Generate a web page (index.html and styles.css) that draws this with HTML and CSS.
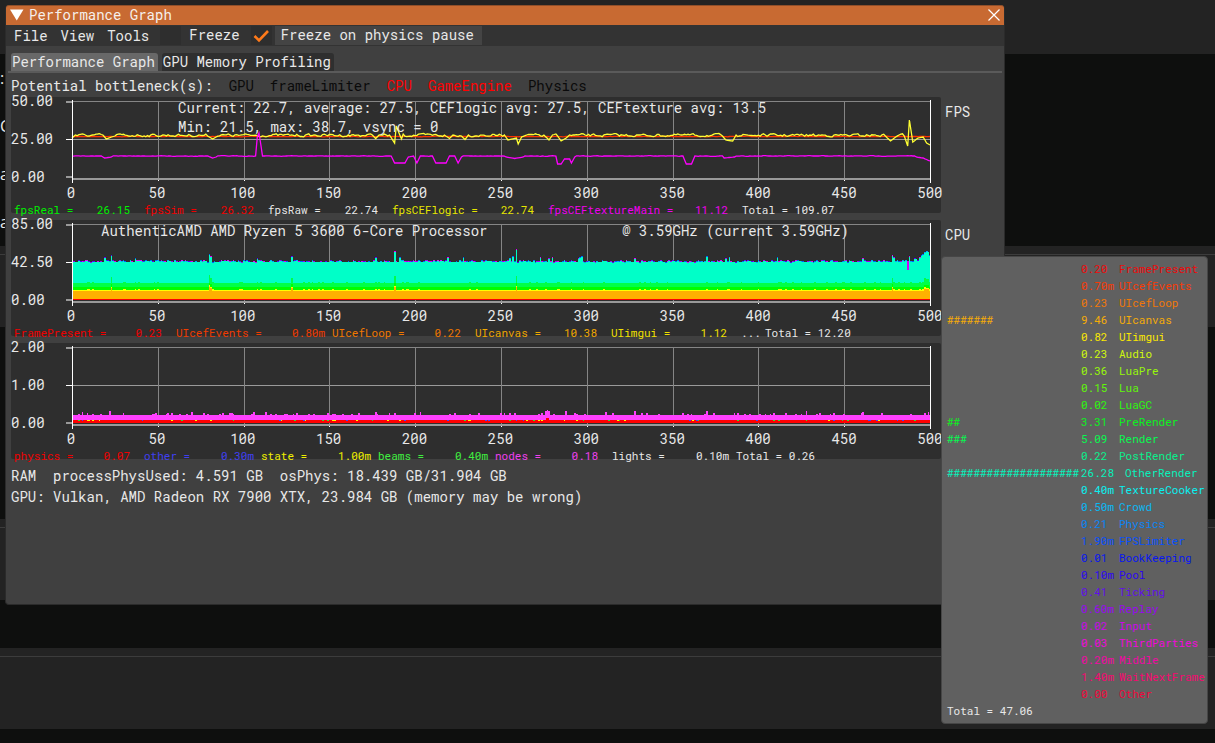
FILE: index.html
```
<!DOCTYPE html>
<html lang="en">
<head>
  <title>Performance Graph</title>
  <meta charset="UTF-8">
  <meta name="viewport" content="width=device-width, initial-scale=1.0">
  <link rel="stylesheet" href="styles.css">
</head>
<body>
<div class="backdrop">
  <div class="band band-top"></div>
  <div class="gap gap-list">
    <span>:</span>
    <span>C</span>
    <span>a</span>
    <span>a(</span>
  </div>
  <div class="band"></div>
  <div class="gap gap-tall"></div>
  <div class="band"></div>
  <div class="gap gap-short"></div>
  <div class="band"></div>
</div>

<main class="window">
  <header class="titlebar">
    <button class="icon-btn" aria-label="Collapse">
      <svg width="14" height="12" viewBox="0 0 14 12"><path d="M0 0.500H13.500L6.750 11.500Z" fill="#fff"/></svg>
    </button>
    <h1>Performance Graph</h1>
    <button class="icon-btn close" aria-label="Close">
      <svg width="12" height="12" viewBox="0 0 12 12"><path d="M0.500 0.500L11.500 11.500M11.500 0.500L0.500 11.500" stroke="#fff" stroke-width="1.200"/></svg>
    </button>
  </header>
  <nav class="menubar">
    <button>File</button>
    <button>View</button>
    <button>Tools</button>
    <label class="check"><input type="checkbox"><span>Freeze</span></label>
    <label class="check check-hover"><input type="checkbox" checked><span>Freeze on physics pause</span></label>
  </nav>
  <div class="tabs">
    <button class="active">Performance Graph</button>
    <button>GPU Memory Profiling</button>
  </div>
  <section class="content">
    <p class="bottleneck">
      <span>Potential bottleneck(s):</span>
      <span class="off">GPU</span>
      <span class="off">frameLimiter</span>
      <span class="hot">CPU</span>
      <span class="hot">GameEngine</span>
      <span class="off">Physics</span>
    </p>

    <div class="graph-row">
      <div class="graph">
        <div class="plot-row">
          <div class="y-axis"><span>50.00</span><span>25.00</span><span>0.00</span></div>
          <svg class="plot" id="plot-fps" viewBox="0 0 865 84" preserveAspectRatio="none"></svg>
        </div>
        <div class="x-axis"></div>
        <div class="legend" id="legend-fps"></div>
        <div class="overlay overlay-fps">Current: 22.7, average: 27.5, CEFlogic avg: 27.5, CEFtexture avg: 13.5<br>Min: 21.5, max: 38.7, vsync = 0</div>
      </div>
      <h2>FPS</h2>
    </div>

    <div class="graph-row">
      <div class="graph">
        <div class="plot-row">
          <div class="y-axis"><span>85.00</span><span>42.50</span><span>0.00</span></div>
          <svg class="plot" id="plot-cpu" viewBox="0 0 865 84" preserveAspectRatio="none"></svg>
        </div>
        <div class="x-axis"></div>
        <div class="legend" id="legend-cpu"></div>
        <div class="overlay overlay-cpu"><span>AuthenticAMD AMD Ryzen 5 3600 6-Core Processor</span><span>@ 3.59GHz (current 3.59GHz)</span></div>
      </div>
      <h2>CPU</h2>
    </div>

    <div class="graph-row">
      <div class="graph">
        <div class="plot-row">
          <div class="y-axis"><span>2.00</span><span>1.00</span><span>0.00</span></div>
          <svg class="plot" id="plot-physics" viewBox="0 0 865 84" preserveAspectRatio="none"></svg>
        </div>
        <div class="x-axis"></div>
        <div class="legend" id="legend-physics"></div>
      </div>
      <h2></h2>
    </div>

    <p class="info">RAM&nbsp; processPhysUsed: 4.591 GB&nbsp; osPhys: 18.439 GB/31.904 GB</p>
    <p class="info">GPU: Vulkan, AMD Radeon RX 7900 XTX, 23.984 GB (memory may be wrong)</p>
  </section>
</main>

<aside class="tooltip">
  <table>
    <tbody id="timings"></tbody>
    <tfoot><tr><td colspan="3">Total = 47.06</td></tr></tfoot>
  </table>
</aside>
<script src="graphs.js"></script>
</body>
</html>
```
FILE: styles.css
```
* {
  box-sizing: border-box;
}
body {
  margin: 0;
  min-height: 100vh;
  background: #0e0f0e;
  color: #e8e8e8;
  font-family: 'Roboto Mono', 'DejaVu Sans Mono', monospace;
  font-size: 14px;
  line-height: 16px;
  overflow: hidden;
}
button {
  font: inherit;
  color: inherit;
  background: none;
  border: none;
  padding: 0;
  cursor: pointer;
}
h1, h2, p {
  margin: 0;
  font-size: 14px;
  font-weight: normal;
}

/* panels behind the window */
.backdrop {
  height: 100vh;
  overflow: hidden;
}
.band {
  height: 81px;
  padding-top: 8px;
  background: #232323;
}
.band::before {
  content: '';
  display: block;
  border-top: 1px solid #3c3c3c;
}
.band-top {
  height: 54px;
}
.band-top::before {
  display: none;
}
.gap-list {
  display: flex;
  flex-direction: column;
  height: 192px;
  font: 16px/48px 'Open Sans', sans-serif;
}
.gap-list span {
  width: 6px;
  overflow: hidden;
}
.gap-tall {
  height: 192px;
}
.gap-short {
  height: 48px;
}

/* main window */
.window {
  position: absolute;
  top: 5px;
  right: 210px;
  bottom: 138px;
  left: 5px;
  background: #404040;
  border: 1px solid #2b2b2b;
  border-top: none;
  border-radius: 4px;
}
.titlebar {
  display: flex;
  align-items: center;
  gap: 5px;
  height: 20px;
  padding: 0 4px 1px;
  background: #c86a32;
  border-top: 1px solid #8f4f2a;
  border-radius: 3px 3px 0 0;
  color: #f6f0ec;
}
.icon-btn {
  display: flex;
}
.close {
  margin-left: auto;
}
.menubar {
  display: flex;
  align-items: center;
  height: 21px;
  padding-left: 8px;
  background: #333;
}
.menubar button {
  margin-right: 13px;
}
.check {
  display: flex;
  align-items: center;
  margin-left: -2px;
}
.check input {
  appearance: none;
  width: 21px;
  height: 19px;
  margin: 0;
  background: #2e2e2e;
}
.check input:checked {
  background: #2e2e2e url("data:image/svg+xml,%3Csvg xmlns='http://www.w3.org/2000/svg' viewBox='0 0 21 19'%3E%3Cpath d='M3.500 10L8 14.500L17 5' fill='none' stroke='%23ff7a1a' stroke-width='2.600'/%3E%3C/svg%3E") center no-repeat;
}
.check span {
  padding: 1px 8px 2px;
}
.check-hover {
  margin-left: 3px;
}
.check-hover span {
  margin-left: 3px;
  padding: 1px 8px 2px 6px;
  background: #444;
}
.tabs {
  display: flex;
  gap: 4px;
  margin: 7px 2px 0;
  padding-left: 3px;
  border-bottom: 2px solid #5a5a5a;
}
.tabs button {
  height: 18px;
  padding: 0 3px 0 1px;
  background: #2f2f2f;
  border-radius: 3px 3px 0 0;
}
.tabs .active {
  background: #686868;
}
.content {
  padding-left: 5px;
}
.bottleneck {
  display: flex;
  gap: 16px;
  padding: 5px 0 3px;
}
.off {
  color: #0a0a0a;
}
.hot {
  color: #f00;
}

/* graphs */
.graph-row {
  display: flex;
  margin-bottom: 7px;
}
.graph-row h2 {
  width: 63px;
  padding: 7px 0 0 4px;
}
.graph {
  position: relative;
  flex: 1;
  min-width: 0;
  padding-top: 3px;
  background: #2e2e2e;
  border-radius: 2px;
}
.plot-row {
  display: flex;
  height: 84px;
  padding-right: 10px;
}
.y-axis {
  display: flex;
  flex-direction: column;
  justify-content: space-between;
  flex: none;
  width: 55px;
  height: 90px;
  margin-top: -6px;
  line-height: 14px;
}
.plot {
  flex: 1;
  min-width: 0;
  height: 84px;
}
.x-axis {
  display: flex;
  justify-content: space-between;
  height: 16px;
  margin: 0 11px 0 60px;
  padding-top: 1px;
}
.x-axis span {
  display: flex;
  justify-content: center;
  width: 0;
}
.legend {
  display: flex;
  margin: 3px 0 -4px;
  padding-left: 3px;
  font-size: 11px;
  line-height: 13px;
  padding-bottom: 1px;
  white-space: nowrap;
}
.legend-item {
  display: flex;
  justify-content: space-between;
  flex: none;
}
.legend-value {
  padding-right: 14px;
}
.legend-value.milli {
  padding-right: 7px;
}
.more {
  width: 24px;
}
.overlay {
  position: absolute;
  top: 1px;
  line-height: 19px;
  white-space: nowrap;
}
.overlay-fps {
  left: 167px;
}
.overlay-cpu {
  display: flex;
  justify-content: space-between;
  left: 90px;
  right: 92px;
}
.info {
  margin-bottom: 5px;
}
.graph-row + .info {
  margin-top: 9px;
}

/* timings tooltip */
.tooltip {
  position: absolute;
  top: 256px;
  right: 7px;
  width: 267px;
  padding: 3px 0 4px 5px;
  background: #606060;
  border: 1px solid #464646;
  border-radius: 4px;
  font-size: 11px;
}
.tooltip table {
  width: 100%;
  border-collapse: collapse;
  table-layout: fixed;
}
.tooltip td {
  height: 17px;
  padding: 0;
  white-space: nowrap;
}
.tooltip .bar {
  width: 134px;
}
.tooltip .time {
  width: 38px;
}
.tooltip .wide {
  padding-left: 6px;
}
```
FILE: graphs.js
```
const COLUMNS = 500;
const STEP = 858 / COLUMNS;

let seed = 7;
function rand() {
  seed = (seed * 16807) % 2147483647;
  return seed / 2147483647;
}

function rect(x, y, w, h, fill) {
  return `<rect x="${x}" y="${y}" width="${w}" height="${h}" fill="${fill}"/>`;
}

function line(points, color) {
  const d = points.map(p => p[0].toFixed(1) + ',' + p[1].toFixed(1)).join(' ');
  return `<polyline points="${d}" fill="none" stroke="${color}" stroke-width="1.3"/>`;
}

function drawGrid() {
  let out = rect(6, 1, 859, 1, '#858585') + rect(6, 39, 859, 1, '#9a9a9a');
  for (let i = 1; i < 10; i++) {
    const x = Math.round(6 + i * 85.8);
    out += rect(x, 1, 1, 78, '#858585') + rect(x, 78, 1, 3, '#fff');
  }
  return out;
}

function drawAxes() {
  return rect(6, 78, 859, 2, '#999')
    + rect(0, 1, 6, 2, '#999') + rect(0, 39, 6, 1, '#fff') + rect(0, 76, 6, 2, '#999')
    + rect(6, 0, 1, 83, '#fff') + rect(864, 0, 1, 83, '#fff');
}

// keys are [column, y] pairs, linearly interpolated over the base line
function series(base, noise, keys) {
  const points = [];
  let drift = 0;
  for (let i = 0; i <= COLUMNS; i++) {
    drift = drift * 0.45 + (rand() - 0.5) * noise;
    let y = base + drift;
    for (let k = 0; k < keys.length - 1; k++) {
      const a = keys[k], b = keys[k + 1];
      if (a[1] !== null && b[1] !== null && i >= a[0] && i <= b[0]) {
        y = a[1] + (b[1] - a[1]) * (i - a[0]) / (b[0] - a[0]);
      }
    }
    points.push([6 + i * STEP, y]);
  }
  return points;
}

function drawFps() {
  const red = series(36.5, 0.4, []);
  const yellow = series(35.3, 2.4, [
    [0, 38], [2, 35], [2, null],
    [18, 35], [20, 39], [23, 37], [25, 36], [25, null],
    [79, 36], [82, 39], [84, 37], [84, null],
    [175, 35], [177, 38.5], [179, 35], [179, null],
    [185, 35], [188, 43], [189, 26], [191, 35], [192, 39], [193, 34], [193, null],
    [217, 35], [220, 38.5], [222, 35], [222, null],
    [227, 36], [229, 39.5], [231, 35], [231, null],
    [252, 35], [254, 40], [259, 38], [260, 44], [262, 37], [265, 35], [265, null],
    [275, 35], [278, 40], [280, 35], [280, null],
    [283, 36], [285, 41], [288, 38], [290, 35], [290, null],
    [379, 36], [381, 40], [385, 41], [387, 35], [387, null],
    [474, 36], [477, 41], [480, 37], [480, null],
    [485, 36], [487, 46], [488, 20], [490, 42], [493, 38], [496, 37], [498, 43], [500, 45]
  ]);
  const magenta = series(56, 0.5, [
    [17, 56], [19, 58], [23, 57], [23, null],
    [79, 56], [82, 58], [84, 57], [84, null],
    [107, 56], [108, 37], [109, 33], [111, 56], [111, null],
    [186, 56], [188, 63], [194, 63], [196, 57], [199, 56], [201, 63], [203, 56], [203, null],
    [210, 56], [212, 63], [218, 63], [220, 56], [223, 56], [225, 63], [227, 57], [227, null],
    [253, 57], [258, 58.5], [263, 57], [263, null],
    [282, 56], [283, 64], [285, 64], [287, 59], [290, 59], [291, 63], [293, 57], [293, null],
    [356, 56], [358, 64], [361, 64], [363, 56], [363, null],
    [380, 58], [386, 57], [386, null],
    [492, 57], [496, 58], [500, 61]
  ]);
  return drawGrid() + line(red, '#f30') + line(yellow, '#ff3') + line(magenta, '#f0f') + drawAxes();
}

function drawCpu() {
  const spikes = {
    18: 3, 22: 6, 36: 2, 79: 7, 80: 5, 107: 3, 127: 5, 176: 4, 187: 10, 190: 4, 218: 3,
    227: 4, 254: 3, 256: 4, 258: 11, 272: 3, 277: 3, 279: 4, 294: 3, 295: 4, 296: 4,
    327: 3, 369: 4, 380: 3, 382: 4, 410: 3, 460: 3, 477: 5, 478: 4, 487: 5, 490: 3,
    491: 3, 493: 4, 494: 6, 495: 6, 496: 8, 497: 10, 498: 10, 499: 6
  };
  const tips = ['#00a0ff', '#5a00ff', '#0060ff', '#a000ff', '#e000ff'];
  let out = drawGrid();
  let prev = 7;
  for (let i = 0; i < COLUMNS; i++) {
    const x = Math.round(7 + i * STEP);
    const w = Math.round(7 + (i + 1) * STEP) - x;
    const spike = spikes[i] || 0;
    const top = 39 - spike - (rand() > 0.7 ? 1 : 0) + (rand() > 0.93 ? 1 : 0);
    const lift = spike > 4 && i < 487 ? Math.min(7, spike) : spike > 7 ? 4 : 0;
    const small = rand() > 0.85 ? 1 : 0;
    const orange = 67 - Math.round(lift / 2);
    out += rect(x, top, w, 77 - top, '#00ffc8');
    out += rect(x, 60 - lift - small, w, 17 + lift + small, '#00ff48');
    out += rect(x, 64 - Math.round(lift / 2), w, 10, '#0f0');
    out += rect(x, orange - small, w, 1 + small, '#ff0');
    out += rect(x, orange + 1, w, 75 - orange, '#ffb000');
    if (top !== prev || rand() > 0.5) {
      out += rect(x, top - 1, w, 1, tips[Math.floor(rand() * tips.length)]);
    }
    prev = top;
  }
  out += rect(841, 38, 2, 9, '#d000ff');
  out += rect(7, 76, 857, 1, '#f00');
  return out + drawAxes();
}

function drawPhysics() {
  const peaks = {
    5: 3, 21: 4, 29: 2, 69: 3, 105: 3, 112: 3, 130: 2, 176: 3, 187: 2, 202: 3,
    249: 2, 254: 2, 275: 4, 276: 5, 277: 4, 287: 4, 310: 3, 327: 4, 369: 4, 427: 4, 460: 3, 498: 3
  };
  const specks = ['#ff0', '#ff0', '#4040ff', '#30e030'];
  let out = drawGrid();
  for (let i = 0; i < COLUMNS; i++) {
    const x = Math.round(7 + i * STEP);
    const w = Math.round(7 + (i + 1) * STEP) - x;
    const top = 69 - (peaks[i] || (rand() > 0.86 ? 1 + Math.round(rand()) : 0));
    out += rect(x, top, w, 77 - top, '#ff40ff');
    out += rect(x, 74, w, 3, '#f00');
    if (rand() > 0.86) {
      out += rect(x, 74, w, 1, specks[Math.floor(rand() * specks.length)]);
    }
  }
  out += rect(480, 72, 3, 3, '#f00');
  return out + drawAxes();
}

function fillLegend(id, items, total, more) {
  let html = '';
  items.forEach(([name, value, color]) => {
    const width = Math.round((name.length + 13.3) * 6.4);
    const milli = value.endsWith('m') ? ' milli' : '';
    html += `<span class="legend-item" style="width:${width}px;color:${color}">`
      + `<span>${name} =</span><span class="legend-value${milli}">${value}</span></span>`;
  });
  if (more) html += '<span class="more">...</span>';
  document.getElementById(id).innerHTML = html + `<span>Total = ${total}</span>`;
}

document.getElementById('plot-fps').innerHTML = drawFps();
document.getElementById('plot-cpu').innerHTML = drawCpu();
document.getElementById('plot-physics').innerHTML = drawPhysics();

document.querySelectorAll('.x-axis').forEach(axis => {
  for (let v = 0; v <= 500; v += 50) {
    axis.innerHTML += `<span>${v}</span>`;
  }
});

fillLegend('legend-fps', [
  ['fpsReal', '26.15', '#00f000'],
  ['fpsSim', '26.32', '#f00000'],
  ['fpsRaw', '22.74', '#e8e8e8'],
  ['fpsCEFlogic', '22.74', '#e6e600'],
  ['fpsCEFtextureMain', '11.12', '#f000f0']
], '109.07');
fillLegend('legend-cpu', [
  ['FramePresent', '0.23', '#f00000'],
  ['UIcefEvents', '0.80m', '#f03c00'],
  ['UIcefLoop', '0.22', '#f07800'],
  ['UIcanvas', '10.38', '#f0a800'],
  ['UIimgui', '1.12', '#f0e000']
], '12.20', true);
fillLegend('legend-physics', [
  ['physics', '0.07', '#f00000'],
  ['other', '0.30m', '#4040f0'],
  ['state', '1.00m', '#f0f000'],
  ['beams', '0.40m', '#40f040'],
  ['nodes', '0.18', '#f040f0'],
  ['lights', '0.10m', '#e8e8e8']
], '0.26');

const timings = [
  ['FramePresent', '0.20', '#ee0a0a'],
  ['UIcefEvents', '0.70m', '#f53c08'],
  ['UIcefLoop', '0.23', '#f07808'],
  ['UIcanvas', '9.46', '#f5ac08', 7],
  ['UIimgui', '0.82', '#fbe800'],
  ['Audio', '0.23', '#d0f80c'],
  ['LuaPre', '0.36', '#98f808'],
  ['Lua', '0.15', '#60f808'],
  ['LuaGC', '0.02', '#2cf80c'],
  ['PreRender', '3.31', '#0cf020', 2],
  ['Render', '5.09', '#08f850', 3],
  ['PostRender', '0.22', '#08f08c'],
  ['OtherRender', '26.28', '#08f0bc', 20],
  ['TextureCooker', '0.40m', '#08f0f0'],
  ['Crowd', '0.50m', '#08b8f5'],
  ['Physics', '0.21', '#0884f5'],
  ['FPSLimiter', '1.90m', '#0850fa'],
  ['BookKeeping', '0.01', '#0818f0'],
  ['Pool', '0.10m', '#2c08f0'],
  ['Ticking', '0.41', '#6010e8'],
  ['Replay', '0.60m', '#9808f0'],
  ['Input', '0.02', '#cc08ea'],
  ['ThirdParties', '0.03', '#f008dc'],
  ['Middle', '0.20m', '#f008a4'],
  ['WaitNextFrame', '1.40m', '#f50870'],
  ['Other', '0.00', '#ee083c']
];
document.getElementById('timings').innerHTML = timings.map(([name, time, color, bar]) =>
  `<tr style="color:${color}"><td class="bar">${'#'.repeat(bar || 0)}</td><td class="time">${time}</td>`
  + `<td class="${time.length > 4 && !time.endsWith('m') ? 'wide' : ''}">${name}</td></tr>`
).join('');
```
